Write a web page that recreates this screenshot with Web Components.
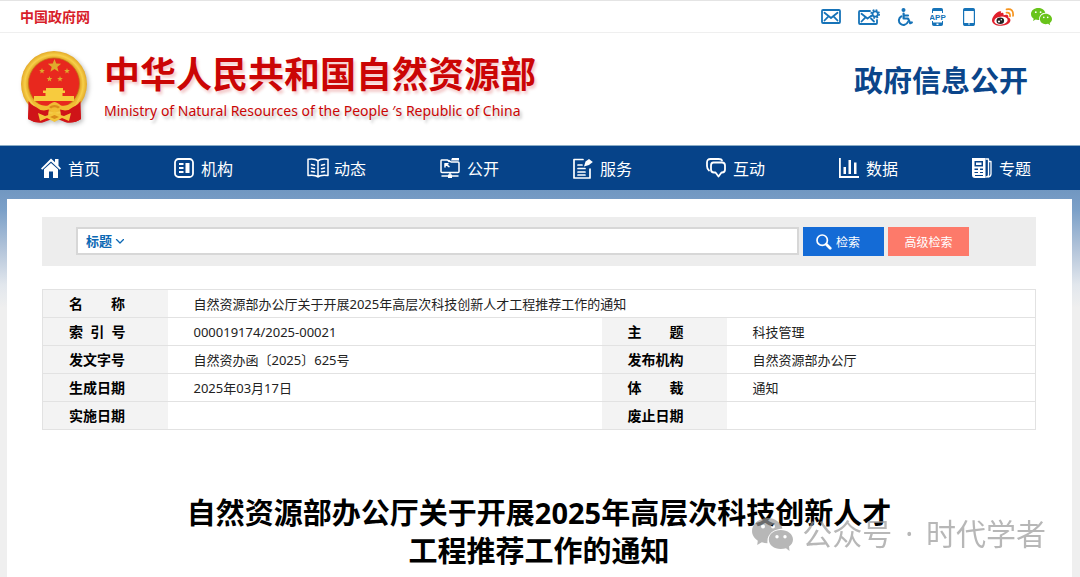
<!DOCTYPE html>
<html lang="zh-CN">
<head>
<meta charset="utf-8">
<meta name="viewport" content="width=device-width, initial-scale=1">
<title>政府信息公开</title>
<style>
  html, body { margin: 0; min-height: 100%; }
  body {
    font-family: "Noto Sans", "Noto Sans CJK SC", sans-serif;
    font-size: 13px;
    color: #222;
    background: #efefef;
  }
</style>
</head>
<body>
<gov-page></gov-page>

<script>
const define = (name, html, setup) => {
  const template = document.createElement('template');
  template.innerHTML = html;
  customElements.define(name, class extends HTMLElement {
    constructor() {
      super();
      this.attachShadow({ mode: 'open' }).append(template.content.cloneNode(true));
      if (setup) setup(this, this.shadowRoot);
    }
  });
};

/* Icons: name -> [width, height, drawing] */
const star = (cx, cy, r) => {
  let p = '';
  for (let i = 0; i < 10; i++) {
    const a = -Math.PI / 2 + i * Math.PI / 5, q = i % 2 ? r * .42 : r;
    p += (i ? 'L' : 'M') + (cx + q * Math.cos(a)).toFixed(2) + ' ' + (cy + q * Math.sin(a)).toFixed(2);
  }
  return `<path d="${p}Z" fill="#dfa92c"/>`;
};
const S = 'fill="none" stroke="currentColor" stroke-linejoin="round" stroke-linecap="round"';
const icons = {
  mail: [20, 15, `<g ${S} stroke-width="1.8"><rect x="1" y="1" width="18" height="13" rx="1"/><path d="M3.5 3.8 10 9l6.500-5.200M3.500 11.500 7 7.800M16.500 11.500 13 7.800"/></g>`],
  mailset: [22, 16, `<g ${S} stroke-width="1.8"><path d="M12 2H2Q1 2 1 3V14Q1 15 2 15H18Q19 15 19 14V11"/><path d="M3.500 4.800 9.500 9.500 13 7M3.500 12.500 7 8.800M16 12.500 13 9.500"/><circle cx="17.200" cy="5" r="2.700"/></g><circle cx="17.200" cy="5" r="4" fill="none" stroke="currentColor" stroke-width="1.6" stroke-dasharray="1.8 1.34"/>`],
  access: [16, 18, `<circle cx="6.500" cy="2" r="2" fill="currentColor"/><g ${S} stroke-width="2.2"><path d="M6.600 5.500V10.500H11L13.200 15.200 14.800 14.500M7 7.500H11"/><path d="M4.300 8.300A4.600 4.600 0 1 0 10.800 14" stroke-width="2"/></g>`],
  app: [16, 18, `<path d="M2 5V1.800Q2 0 3.800 0H11.200Q13 0 13 1.800V5H12V3H3V5ZM2 13V16.200Q2 18 3.800 18H11.200Q13 18 13 16.200V13H12V14.500H3V13Z" fill="currentColor"/><rect x="6.500" y="15.500" width="2" height="1.500" fill="#fff"/><text x="7.500" y="11.800" font-family="Liberation Sans" font-size="8" font-weight="700" text-anchor="middle" fill="currentColor">APP</text>`],
  phone: [12, 18, `<rect x=".6" y=".6" width="10.800" height="16.800" rx="1.200" fill="#fff" stroke="currentColor" stroke-width="1.2"/><path d="M1 1H11V3H1ZM1 15H11V17.400H1Z" fill="currentColor"/><circle cx="6" cy="16" r=".8" fill="#fff"/>`],
  weibo: [22, 18, `<path d="M8.500 5.200C11 4 12 5 11.500 7.300 15 6 17 7.200 16.200 9.500 20.500 11 18.500 16.500 11 17.600 5 18.500 0 16 0 12.500 0 9 5 3 8.500 3.300 9.600 3.500 9.300 4.500 8.500 5.200Z" fill="#e01f2b"/><ellipse cx="9" cy="12.600" rx="6.700" ry="4" fill="#fff" transform="rotate(-7 9 12.600)"/><ellipse cx="8.300" cy="12.700" rx="3.800" ry="3.200" fill="#222"/><circle cx="7" cy="13.500" r="1.100" fill="#fff"/><circle cx="9.300" cy="11.800" r=".7" fill="#fff"/><path d="M14.500 4.700Q18.500 4 18 8.500M14.500 1.300Q22 0 21 8" fill="none" stroke="#f6941d" stroke-width="1.7" stroke-linecap="round"/>`],
  wechat: [21, 18, `<path d="M7.200 0C3.200 0 0 2.600 0 6 0 8 1 9.600 2.700 10.700L2 13 4.700 11.600Q6.600 12.200 8.300 11.900C7.500 8 10.500 4.800 14.300 4.700 13.600 2 10.700 0 7.200 0Z" fill="#69c41b"/><path d="M14.700 5.700C11.200 5.700 8.900 8.200 8.900 11 8.900 14 11.500 16.200 14.700 16.200Q16 16.200 17 15.800L19.200 17.300 18.700 15C20.200 14 21 12.600 21 11 21 8.200 18.300 5.700 14.700 5.700Z" fill="#69c41b"/><g fill="#fff"><circle cx="4.800" cy="4.200" r=".9"/><circle cx="9.600" cy="4.200" r=".9"/><circle cx="12.800" cy="9.400" r=".8"/><circle cx="16.700" cy="9.400" r=".8"/></g>`],
  home: [20, 20, `<path d="M0 10.500 10 .5 14 4.200V1H17.500V7.700L20 10.500 18.800 11.700 10 3.600 1.200 11.700Z" fill="currentColor"/><path d="M3 11.200 10 4.900 17 11.200V20H12V13.500H8V20H3Z" fill="currentColor"/>`],
  org: [20, 20, `<g ${S} stroke-width="1.8"><rect x="1" y="1" width="18" height="18" rx="3.500"/></g><path d="M5 5H9.500V7H5ZM5 9H9.500V11H5ZM5 13H9.500V15H5ZM11.500 5H15.500V15H11.500Z" fill="currentColor"/>`],
  book: [22, 20, `<g ${S} stroke-width="1.5"><path d="M11 3C9 .8 5 .8 1 1.300V17.500C5 17 9 17 11 19 13 17 17 17 21 17.500V1.300C17 .8 13 .8 11 3V18.500"/><path d="M4.500 6.500 7.500 7.200M4.500 10 7.500 10.700M4.500 13.500 7.500 14M17.500 6.500 14.500 7.200M17.500 10 14.500 10.700M17.500 13.500 14.500 14"/></g>`],
  open: [20, 20, `<g ${S} stroke-width="1.5"><path d="M9 3.500 7.500 2H1.500Q1 2 1 3V13.500Q1 14.500 2 14.500H18Q19 14.500 19 13.500V5Q19 4 18 4H11L9 2.500M10 15V17M2 18H18"/><path d="M5 9V5.700H8M5 5.700 9 8.600"/></g><path d="M12 0H19V2.500H11ZM8 16.500H12V20H8Z" fill="currentColor"/>`],
  service: [20, 21, `<g ${S} stroke-width="1.7"><path d="M10 1.500H1V20H17V11M5 7H9M5 10.500H12M5 14H12M5 17H12"/></g><path d="M11 8.500 12.500 3.500 16 1 19.800 4 16 7Z" fill="currentColor"/>`],
  talk: [20, 20, `<g ${S} stroke-width="1.8"><path d="M3 12.500Q1 11 1 8V4.500Q1 1 4.500 1H12.500Q15.500 1 16 2.500"/><path d="M7.500 4.500H16Q19 4.500 19 7.500V11.500Q19 14.500 16 14.500H15.500L12.500 18.500 9.500 14.500H8Q5 14.500 5 11.500V7.500Q5 4.500 7.500 4.500Z"/></g>`],
  chart: [20, 20, `<path d="M0 0H1.800V18H20V20H0ZM4.500 9H7V16H4.500ZM9.500 2H12V16H9.500ZM15 4.500H17.500V16H15Z" fill="currentColor"/>`],
  news: [20, 20, `<path fill-rule="evenodd" d="M0 0H13.500V20H3Q0 20 0 17ZM2.500 3V8.500H11V3ZM2.500 10.500V12H6V10.500ZM8 10.500V12H11V10.500ZM2.500 14V15H6V14ZM8 14V15H11V14ZM3 17V18H11V17Z" fill="currentColor"/><path d="M4 4.500H9.500V7H4Z" fill="currentColor"/><g ${S} stroke-width="1.3"><path d="M14 1H16.500V16.500Q16.500 19 14 19M16.500 3.500H19V16Q19 18.500 16 19"/></g>`],
  search: [16, 16, `<g ${S}><circle cx="6.200" cy="6.200" r="5.200" stroke-width="1.7"/><path d="M10.500 10.500 14.200 14.200" stroke-width="2.8"/></g>`],
  down: [9, 5, `<path d="M1.500 .5 5 4 8.500 .5" ${S} stroke-width="1.3"/>`],
  watermark: [41, 33, `<g fill="currentColor"><path d="M16 0C7 0 0 5.500 0 13 0 17 2.500 20.500 5.800 22.700L5.200 27 9.800 24.300Q12.500 25.300 15.500 25.300C14.500 16.500 21 11 30.500 10.500 28.500 4.500 23 0 16 0ZM11 6.500A2 2 0 1 1 11 10.500 2 2 0 0 1 11 6.500ZM21 6.500A2 2 0 1 1 21 10.500 2 2 0 0 1 21 6.500Z"/><path d="M28.800 12C22 12 16.800 16 16.800 21.500S22 31 28.800 31Q31.500 31 34 30.200L37.500 33 37 28.500C39.500 26.800 41 24.400 41 21.500 41 16 35.500 12 28.800 12ZM25 17A1.700 1.700 0 1 1 25 20.400 1.700 1.700 0 0 1 25 17ZM33 17A1.700 1.700 0 1 1 33 20.400 1.700 1.700 0 0 1 33 17Z"/></g>`],
  emblem: [70, 74, `<defs><radialGradient id="g"><stop offset=".76" stop-color="#dc9a1c"/><stop offset=".88" stop-color="#f7d04a"/><stop offset="1" stop-color="#e3a828"/></radialGradient></defs>
    <path d="M10 50 8 69Q16 74 24 72L35 68 45 72Q54 74 61 69L59 50Z" fill="#d91519"/>
    <circle cx="34" cy="34" r="33" fill="url(#g)"/>
    <circle cx="34" cy="33.500" r="25.500" fill="#e8281e" stroke="#bf6e18" stroke-width=".7"/>
    ${star(34.5, 16, 7)}${star(22, 21, 3)}${star(47, 21, 3)}${star(29.500, 29, 3)}${star(40, 29, 3)}
    <path d="M26 38H43V40.500H45V43H42.500V46H54V51H14V46H25.500V43H23V40.500H26Z" fill="#f7cb3e"/>
    <path d="M8.500 51Q13 58 22 58L29 59 28 65 24 72Q16 74 8 69ZM60.500 51Q56 58 47 58L40 59 41 65 45 72Q54 74 61 69Z" fill="#cf1418"/>
    <path d="M11 49Q20 57 28 55.500 32 52 34.500 52T41 55.500Q49 57 58 49 54 60 45 60.500L40 59.500 34.500 63 29 59.500 24 60.500Q15 60 11 49Z" fill="#f1bd33"/>
    <path d="M18 63 25 66 31 64.500 34.500 61.500 38 64.500 44 66 51 63 49 71 42 68 34.500 72 27 68 20 71Z" fill="#f3c53a"/>
    <path d="M29 57Q34.500 53 40 57L38 58.500Q34.500 56 31 58.500ZM30 67 34.500 65 39 67 34.500 69Z" fill="#d98c1a"/>`]
};
const icon = name => {
  const [w, h, body] = icons[name];
  return `<svg width="${w}" height="${h}" viewBox="0 0 ${w} ${h}" aria-hidden="true">${body}</svg>`;
};

define('top-bar', `<style>
  :host { display: flex; justify-content: space-between; align-items: center; box-sizing: border-box;
    height: 33px; padding: 0 28px 0 20px; background: #fff; border-top: 1px solid #e4e4e4; border-bottom: 1px solid #efefef; }
  a { color: #d81e2a; text-decoration: none; }
  .site { font-size: 14px; font-weight: 700; line-height: 20px; }
  nav { display: flex; align-items: center; gap: 17px; }
  nav a { color: #1673b8; }
  svg { display: block; }
</style>
<a class="site" href="#">中国政府网</a>
<nav>
  <a href="#" aria-label="邮箱">${icon('mail')}</a>
  <a href="#" aria-label="邮箱设置">${icon('mailset')}</a>
  <a href="#" aria-label="无障碍">${icon('access')}</a>
  <a href="#" aria-label="客户端">${icon('app')}</a>
  <a href="#" aria-label="手机版">${icon('phone')}</a>
  <a href="#" aria-label="微博">${icon('weibo')}</a>
  <a href="#" aria-label="微信">${icon('wechat')}</a>
</nav>`);

define('site-header', `<style>
  :host { display: flex; align-items: center; justify-content: space-between; box-sizing: border-box;
    height: 112px; padding: 0 52px 4px 20px; background: #fff; }
  .brand { display: flex; align-items: center; gap: 14px; color: #cb0505; }
  .brand svg { display: block; flex: none; filter: drop-shadow(2px 2px 2px rgba(0,0,0,.25)); }
  strong { display: block; font-size: 36px; line-height: 44px; text-shadow: 2px 3px 3px rgba(200,0,0,.2); white-space: nowrap; }
  small { display: block; font-size: 14px; line-height: 20px; margin-top: 4px; text-shadow: 2px 3px 3px rgba(0,0,0,.25); white-space: nowrap; }
  h2 { margin: 0; padding-bottom: 12px; font-size: 29px; line-height: 40px; color: #0a458a; white-space: nowrap; }
</style>
<div class="brand">${icon('emblem')}<div><strong>中华人民共和国自然资源部</strong><small>Ministry of Natural Resources of the People ′s Republic of China</small></div></div>
<h2>政府信息公开</h2>`);

define('main-nav', `<style>
  :host { display: block; background: #064389; border-top: 1px solid #8badc6; }
  nav { display: grid; grid-template-columns: repeat(8, 1fr); padding: 0 9px 0 7px; }
  a { display: flex; align-items: center; gap: 7px; height: 44px; padding-left: 34px; color: #fff; font-size: 16px; text-decoration: none; white-space: nowrap; }
  .i { width: 20px; flex: none; }
  svg { display: block; }
</style><nav></nav>`, (host, root) => {
  root.querySelector('nav').innerHTML = [['home', '首页'], ['org', '机构'], ['book', '动态'], ['open', '公开'],
    ['service', '服务'], ['talk', '互动'], ['chart', '数据'], ['news', '专题']]
    .map(([i, t]) => `<a href="#"><span class="i">${icon(i)}</span>${t}</a>`).join('');
});

define('search-bar', `<style>
  :host { display: block; background: #ededed; }
  form { display: flex; gap: 4px; height: 29px; padding: 10px 67px 10px 34px; }
  .field { flex: 1; display: flex; align-items: center; box-sizing: border-box; height: 28px; background: #fff; border: 2px solid #d7d7d7; padding-left: 8px; }
  select, input, button { font: inherit; border: 0; margin: 0; padding: 0; }
  select { appearance: none; background: none; color: #0c68b4; font-weight: 700; font-size: 13px; width: 29px; }
  .field svg { flex: none; color: #0c68b4; }
  input { flex: 1; min-width: 0; height: 24px; background: none; outline: none; margin-left: 8px; }
  button { display: flex; align-items: center; justify-content: center; gap: 4px; box-sizing: border-box; width: 81px; color: #fff; font-size: 12px; }
  .go { background: #146bd6; justify-content: flex-start; padding-left: 13px; }
  .adv { background: #fd7a6a; }
</style>
<form onsubmit="return false">
  <div class="field"><select aria-label="检索范围"><option>标题</option></select>${icon('down')}<input type="text" aria-label="检索词"></div>
  <button class="go" type="submit">${icon('search')}检索</button>
  <button class="adv" type="button">高级检索</button>
</form>`);

define('doc-info', `<style>
  :host { display: block; }
  table { width: 100%; border-collapse: collapse; table-layout: fixed; border: 1px solid #e2e2e2; font-size: 13px; line-height: 20px; }
  .k { width: 125px; } .v { width: 434px; }
  th, td { box-sizing: border-box; height: 28px; padding: 0 26px; text-align: left; white-space: pre; border: 0; border-bottom: 1px solid #e2e2e2; }
  th { background: #f3f3f3; color: #000; font-size: 14px; }
</style>
<table>
  <colgroup><col class="k"><col class="v"><col class="k"><col></colgroup>
  <tr><th scope="row">名　　称</th><td colspan="3">自然资源部办公厅关于开展2025年高层次科技创新人才工程推荐工作的通知</td></tr>
  <tr><th scope="row">索&nbsp;&nbsp;引&nbsp;&nbsp;号</th><td>000019174/2025-00021</td><th scope="row">主　　题</th><td>科技管理</td></tr>
  <tr><th scope="row">发文字号</th><td>自然资办函〔2025〕625号</td><th scope="row">发布机构</th><td>自然资源部办公厅</td></tr>
  <tr><th scope="row">生成日期</th><td>2025年03月17日</td><th scope="row">体　　裁</th><td>通知</td></tr>
  <tr><th scope="row">实施日期</th><td></td><th scope="row">废止日期</th><td></td></tr>
</table>`);

define('water-mark', `<style>
  :host { position: absolute; right: 34px; bottom: 21px; display: flex; align-items: center; gap: 9px; color: #999; opacity: .7;
    font-size: 30px; line-height: 44px; pointer-events: none; white-space: nowrap; }
  svg { display: block; }
  ::slotted(i) { font-style: normal; margin: 0 5px; }
</style>${icon('watermark')}<span><slot></slot></span>`);

define('gov-page', `<style>
  :host { display: flex; flex-direction: column; min-height: 100vh; position: relative; }
  main { flex: 1; display: flex; flex-direction: column; padding: 9px 8px 0 7px;
    background: linear-gradient(#7197c1 0, #7ba0c8 20px, #b4c5da 60px, #e2e7ed 95px, #efefef 118px); }
  article { flex: 1; background: #fff; padding: 18px 36px 6px 35px; }
  doc-info { margin-top: 23px; }
  h1 { margin: 64px 0 0; font-size: 29px; line-height: 38px; text-align: center; color: #000; }
</style>
<top-bar></top-bar>
<site-header></site-header>
<main-nav></main-nav>
<main><article>
  <search-bar></search-bar>
  <doc-info></doc-info>
  <h1>自然资源部办公厅关于开展2025年高层次科技创新人才<br>工程推荐工作的通知</h1>
</article></main>
<water-mark>公众号 <i>·</i> 时代学者</water-mark>`);
</script>
</body>
</html>
